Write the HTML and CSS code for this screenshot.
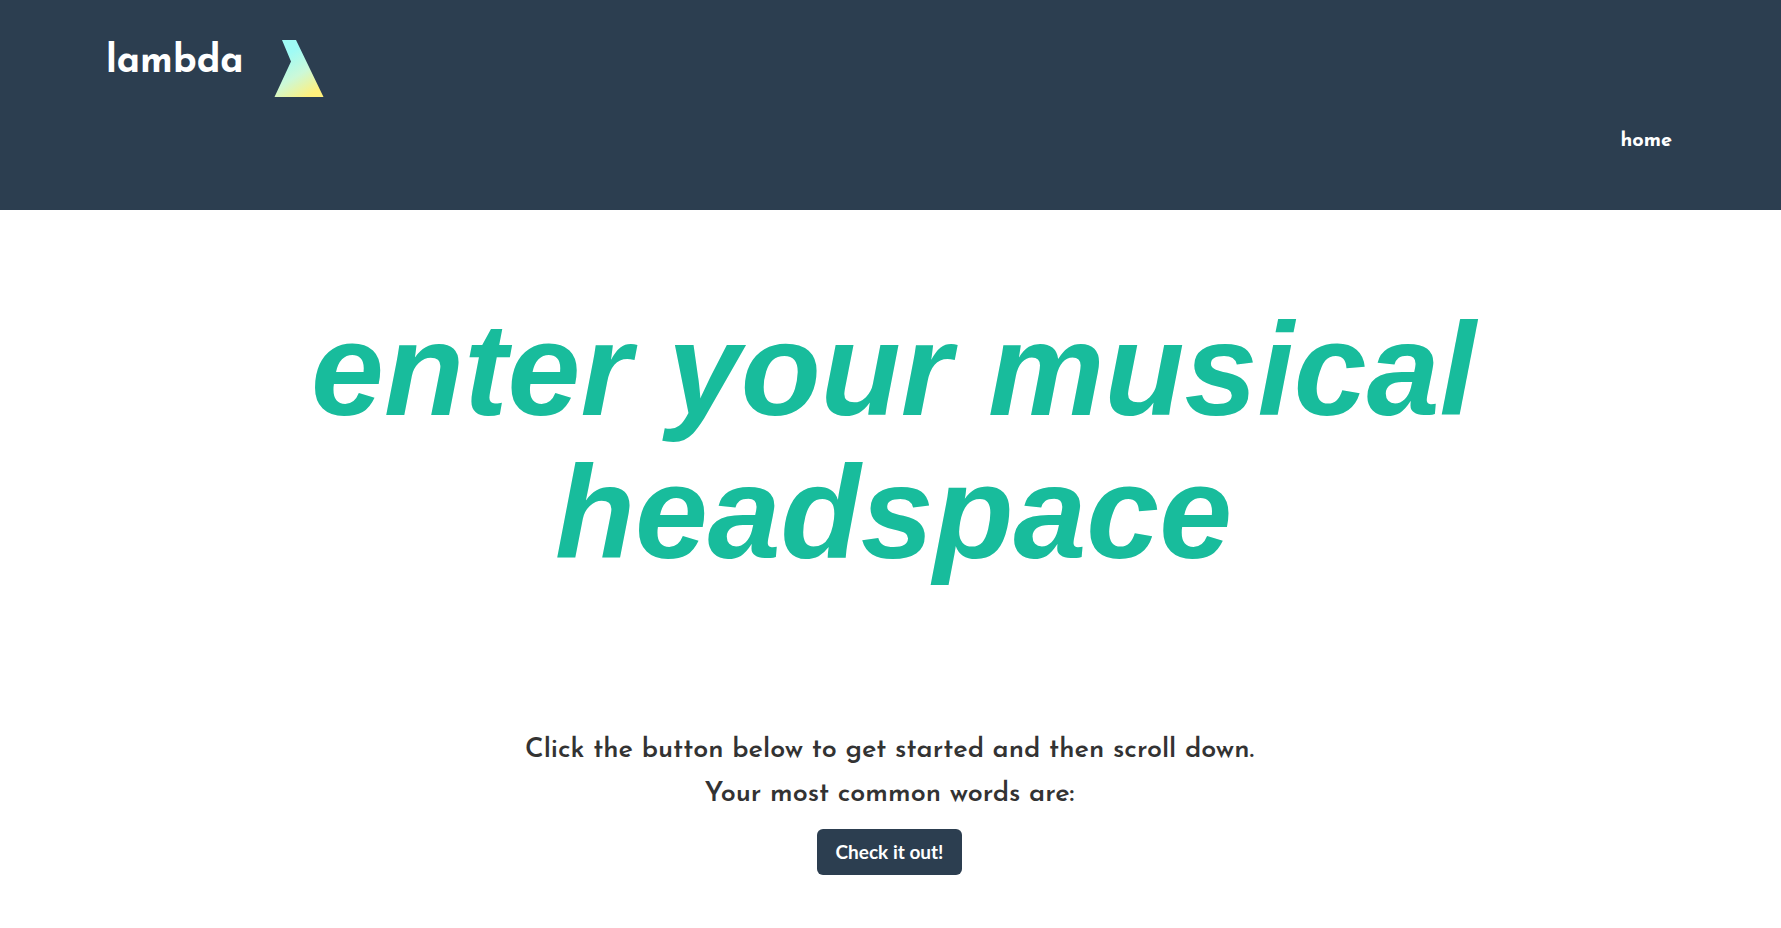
FILE: index.html
```html
<!DOCTYPE html>
<html lang="en">
<head>
<meta charset="utf-8">
<meta name="viewport" content="width=device-width, initial-scale=1">
<title>lambda</title>
<link rel="stylesheet" href="styles.css">
</head>
<body>
<nav class="navbar">
  <a class="brand" href="#">
    <span>lambda</span>
    <svg class="logo" viewBox="0 0 50 58" aria-hidden="true">
      <defs>
        <linearGradient id="fade" gradientUnits="userSpaceOnUse" x1="14" y1="14" x2="38" y2="54">
          <stop offset="0" stop-color="#9ffbf5"/>
          <stop offset="0.5" stop-color="#ccf9d8"/>
          <stop offset="1" stop-color="#fff07c"/>
        </linearGradient>
      </defs>
      <path d="M8 0H22L49.500 57H.500L17 21.500Z" fill="url(#fade)"/>
    </svg>
  </a>
  <a class="nav-link" href="#">home</a>
</nav>
<main class="hero">
  <h1 class="title">enter your musical headspace</h1>
  <p class="lead">Click the button below to get started and then scroll down.</p>
  <p class="lead">Your most common words are:</p>
  <button class="button" type="button">Check it out!</button>
</main>
</body>
</html>
```
FILE: styles.css
```css
* { box-sizing: border-box; }
body { margin: 0; background: #fff; color: #333; font-family: "Josefin Sans", Lato, sans-serif; }
.navbar { display: flex; flex-direction: column; background: #2c3e50; padding: 40px 106px 55px; }
.brand { display: flex; align-self: flex-start; gap: 30px; color: #fff; font-size: 38px; line-height: 46px; font-weight: 700; text-decoration: none; }
.logo { width: 50px; height: 58px; }
.nav-link { align-self: flex-end; margin-top: 29px; padding-right: 3px; color: #fff; font-size: 20px; line-height: 28px; font-weight: 700; text-decoration: none; }
.hero { display: flex; flex-direction: column; align-items: center; padding: 88px 282px 88px 280px; text-align: center; }
.title { margin: 0 0 145px; padding-left: 8px; color: #18bc9c; font: italic 700 131px/143px "Liberation Sans", Arial, sans-serif; }
.lead { margin: 0; font-size: 27px; line-height: 44px; font-weight: 650; }
.button { margin-top: 12px; height: 46px; padding: 0 19px; border: 0; border-radius: 6px; background: #2c3e50; color: #fff; font: 700 19px/28px Lato, sans-serif; }
```
